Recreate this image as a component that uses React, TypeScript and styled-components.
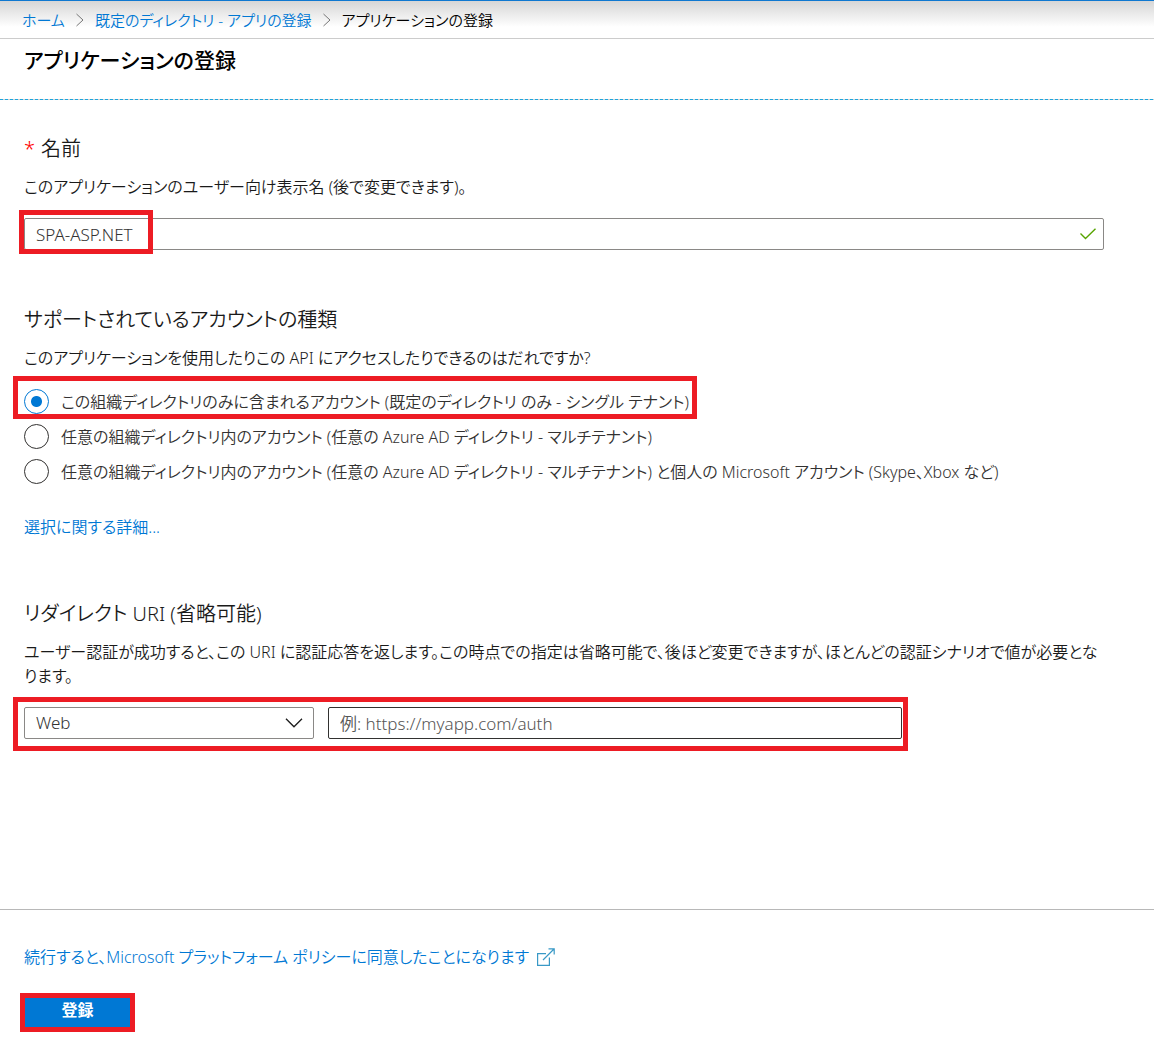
import React, { useState } from 'react';
import styled, { createGlobalStyle, css } from 'styled-components';

const GlobalStyle = createGlobalStyle`
  *, *::before, *::after { box-sizing: border-box; }
  body {
    margin: 0;
    background: #fff;
    color: #1a1a1a;
    font-family: "Noto Sans", "Noto Sans CJK JP", sans-serif;
    font-size: 16px;
    line-height: 24px;
    font-weight: 350;
    font-feature-settings: "palt";
  }
  input, select, button { font: inherit; font-feature-settings: inherit; color: inherit; margin: 0; }
`;

const Page = styled.div`
  display: flex;
  flex-direction: column;
  min-height: 100vh;
`;

const Breadcrumb = styled.nav`
  height: 39px;
  padding: 0 22px;
  border-top: 1px solid #0f78d0;
  border-bottom: 1px solid #ccc;
  background: linear-gradient(#d6d6d6, #fff 26px);
  font-size: 15px;

  ol {
    display: flex;
    align-items: center;
    height: 100%;
    margin: 0;
    padding: 0;
    list-style: none;
  }
  li { display: flex; align-items: center; color: #000; }
  svg { margin: 0 10px; }
`;

const Link = styled.a`
  color: #0078d4;
  text-decoration: none;
  &:hover { text-decoration: underline; }
`;

const TitleBar = styled.header`
  height: 61px;
  padding: 5px 24px;
  background: repeating-linear-gradient(90deg, #1ba5de 0 3px, #d4d0ce 3px 5px) bottom / 100% 1px no-repeat;
`;

const Title = styled.h1`
  margin: 0;
  font-size: 21px;
  line-height: 32px;
  font-weight: 500;
  color: #000;
`;

const Form = styled.form`
  flex: 1;
  display: flex;
  flex-direction: column;
`;

const Fields = styled.div`
  flex: 1;
  display: flex;
  flex-direction: column;
  gap: 56px;
  padding: 35px 50px 64px 24px;
`;

const Section = styled.section`
  display: flex;
  flex-direction: column;
`;

const Heading = styled.h2`
  margin: 0 0 12px;
  font-size: 20px;
  line-height: 28px;
  font-weight: 350;
`;

const Required = styled.span`
  margin-right: 6px;
  color: #f00;
`;

const Description = styled.p`
  margin: 0 0 19px;
`;

const Field = styled.div`
  position: relative;
  display: flex;
`;

const control = css`
  width: 100%;
  height: 32px;
  padding: 0 11px;
  border: 1px solid #8a8886;
  border-radius: 2px;
  background: #fff;
  color: #333;
  font-size: 17px;
  outline: none;
  &::placeholder { color: #555; opacity: 1; }
`;

const TextBox = styled.input<{ $dark?: boolean }>`
  ${control}
  ${(p) => p.$dark && 'border-color: #323130;'}
`;

const Select = styled.select`
  ${control}
  appearance: none;
`;

const FieldIcon = styled.svg<{ $right?: number }>`
  position: absolute;
  top: 50%;
  right: ${(p) => p.$right ?? 8}px;
  transform: translateY(-50%);
  pointer-events: none;
`;

const Callout = styled.span<{ $box: string; $width?: string }>`
  position: absolute;
  inset: ${(p) => p.$box};
  width: ${(p) => p.$width ?? 'auto'};
  border: 5px solid #ed1c24;
  pointer-events: none;
`;

const Options = styled.div`
  display: flex;
  flex-direction: column;
  align-items: flex-start;
  gap: 10px;
  margin-bottom: 31px;
`;

const Option = styled.label`
  position: relative;
  display: flex;
  align-items: center;
  gap: 12px;
  color: #323130;
`;

const Radio = styled.input`
  flex: none;
  appearance: none;
  width: 25px;
  height: 25px;
  border: 1px solid #323130;
  border-radius: 50%;
  background: #fff;
  &:checked {
    border-color: #0078d4;
    background: radial-gradient(circle, #0078d4 5px, #fff 6px);
  }
`;

const Details = styled.div`
  padding-bottom: 5px;
`;

const RedirectRow = styled.div`
  position: relative;
  display: grid;
  grid-template-columns: 290px 1fr;
  gap: 14px;
  max-width: 878px;
`;

const Footer = styled.footer`
  display: flex;
  flex-direction: column;
  align-items: flex-start;
  gap: 28px;
  padding: 35px 24px 9px;
  border-top: 1px solid #b8b8b8;
`;

const PolicyLink = styled(Link)`
  display: flex;
  align-items: center;
  gap: 8px;
`;

const Submit = styled.button`
  width: 107px;
  height: 31px;
  padding: 0 0 6px;
  border: 0;
  background: #0078d4;
  color: #fff;
  font-weight: 600;
  line-height: 24px;
  outline: 5px solid #ed1c24;
  outline-offset: -1px;
`;

const Separator = () => (
  <svg width="10" height="14" viewBox="0 0 10 14" fill="none" stroke="#777" aria-hidden="true">
    <path d="M1.5 1 8 7l-6.5 6" />
  </svg>
);

const accountTypes = [
  'この組織ディレクトリのみに含まれるアカウント (既定のディレクトリ のみ - シングル テナント)',
  '任意の組織ディレクトリ内のアカウント (任意の Azure AD ディレクトリ - マルチテナント)',
  '任意の組織ディレクトリ内のアカウント (任意の Azure AD ディレクトリ - マルチテナント) と個人の Microsoft アカウント (Skype、Xbox など)',
];

export default function App() {
  const [name, setName] = useState('SPA-ASP.NET');
  const [account, setAccount] = useState(0);

  return (
    <Page lang="ja">
      <GlobalStyle />
      <Breadcrumb>
        <ol>
          <li><Link href="#home">ホーム</Link><Separator /></li>
          <li><Link href="#apps">既定のディレクトリ - アプリの登録</Link><Separator /></li>
          <li aria-current="page">アプリケーションの登録</li>
        </ol>
      </Breadcrumb>
      <TitleBar><Title>アプリケーションの登録</Title></TitleBar>
      <Form onSubmit={(e) => e.preventDefault()}>
        <Fields>
          <Section>
            <Heading><Required>*</Required><label htmlFor="name">名前</label></Heading>
            <Description>このアプリケーションのユーザー向け表示名 (後で変更できます)。</Description>
            <Field>
              <TextBox id="name" value={name} onChange={(e) => setName(e.target.value)} />
              <FieldIcon width="16" height="12" viewBox="0 0 16 12" fill="none" stroke="#57a300" strokeWidth="1.4">
                <path d="M0.5 5.5 5.5 10.5 15.5 0.8" />
              </FieldIcon>
              <Callout $box="-8px auto -4px -5px" $width="134px" />
            </Field>
          </Section>

          <Section>
            <Heading id="types">サポートされているアカウントの種類</Heading>
            <Description>このアプリケーションを使用したりこの API にアクセスしたりできるのはだれですか?</Description>
            <Options role="radiogroup" aria-labelledby="types">
              {accountTypes.map((label, i) => (
                <Option key={label}>
                  <Radio type="radio" name="account" checked={account === i} onChange={() => setAccount(i)} />
                  {label}
                  {i === 0 && <Callout $box="-13px -8px -5px -11px" />}
                </Option>
              ))}
            </Options>
            <Details><Link href="#details">選択に関する詳細...</Link></Details>
          </Section>

          <Section>
            <Heading>リダイレクト URI (省略可能)</Heading>
            <Description>
              ユーザー認証が成功すると、この URI に認証応答を返します。この時点での指定は省略可能で、後ほど変更できますが、ほとんどの認証シナリオで値が必要となります。
            </Description>
            <RedirectRow>
              <Field>
                <Select aria-label="プラットフォーム" defaultValue="Web">
                  <option>Web</option>
                </Select>
                <FieldIcon $right={11} width="18" height="11" viewBox="0 0 18 11" fill="none" stroke="#222" strokeWidth="1.4">
                  <path d="M1 1.2 9 9.2 17 1.2" />
                </FieldIcon>
              </Field>
              <TextBox $dark aria-label="リダイレクト URI" placeholder="例: https://myapp.com/auth" />
              <Callout $box="-10px -6px -12px -11px" />
            </RedirectRow>
          </Section>
        </Fields>

        <Footer>
          <PolicyLink href="#policy">
            続行すると、Microsoft プラットフォーム ポリシーに同意したことになります
            <svg width="18" height="18" viewBox="0 0 18 18" fill="none" stroke="#3999c6" strokeWidth="1.2" aria-hidden="true">
              <path d="M9 5.6H0.6V17.4H12.4V9.5M6 12 17 1M11.5 0.8H17.2V6.5" />
            </svg>
          </PolicyLink>
          <Submit type="submit">登録</Submit>
        </Footer>
      </Form>
    </Page>
  );
}
